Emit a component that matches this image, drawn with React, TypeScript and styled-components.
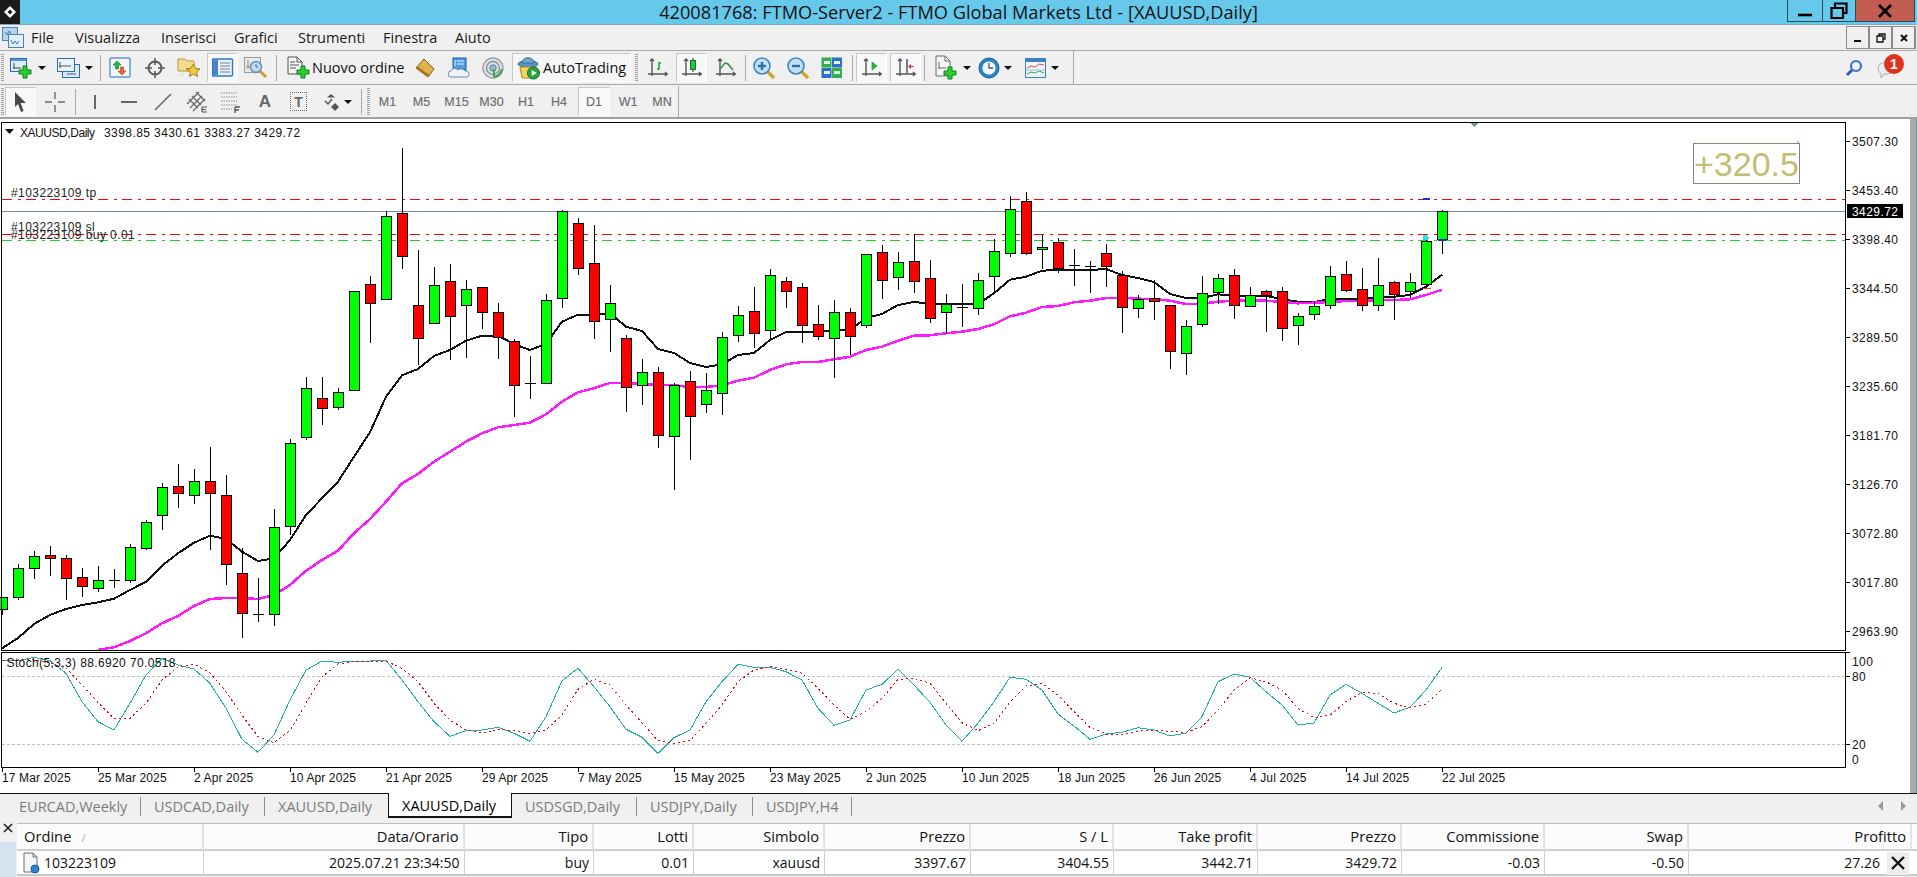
import React from "react";
import styled, { createGlobalStyle } from "styled-components";

const UI_FONT = `"Open Sans", "Noto Sans", "Liberation Sans", sans-serif`;
const CHART_FONT = `"Liberation Sans", Arial, sans-serif`;

const Global = createGlobalStyle`
  html, body { margin: 0; padding: 0; background: #f0f0f0; overflow: hidden; }
  #root { width: 1917px; height: 877px; }
  * { box-sizing: border-box; }
`;

const Page = styled.div`
  width: 1917px;
  height: 877px;
  display: flex;
  flex-direction: column;
  font-family: ${UI_FONT};
  background: #f0f0f0;
  color: #111;
  overflow: hidden;
`;

/* ---------- title bar ---------- */
const TitleBar = styled.header`
  height: 25px;
  flex: none;
  display: grid;
  grid-template-columns: 1fr auto 1fr;
  background: #66c9eb;
  border-bottom: 1px solid #7fa6b8;
`;
const AppBadge = styled.div`
  width: 20px;
  height: 24px;
  background: #1b1b1b;
  display: flex;
  align-items: center;
  justify-content: center;
`;
const TitleText = styled.div`
  font-size: 18.2px;
  line-height: 24px;
  white-space: nowrap;
  color: #111;
`;
const WindowButtons = styled.div`
  justify-self: end;
  display: flex;
  height: 22px;
  margin-right: 2px;
`;
const WindowButton = styled.div<{ $w: number; $close?: boolean }>`
  width: ${(p) => p.$w}px;
  height: 22px;
  border: 1px solid #2c4a58;
  border-top: none;
  margin-left: -1px;
  background: ${(p) => (p.$close ? "#c25b50" : "transparent")};
  display: flex;
  align-items: center;
  justify-content: center;
`;

/* ---------- menu ---------- */
const MenuBar = styled.nav`
  height: 25px;
  flex: none;
  display: flex;
  align-items: center;
  background: #f0f0f0;
  position: relative;
`;
const MenuGlyph = styled.div`
  width: 31px;
  padding-left: 2px;
  display: flex;
`;
const MenuItem = styled.span<{ $w: number }>`
  width: ${(p) => p.$w}px;
  font-size: 14.5px;
  line-height: 25px;
  color: #1a1a1a;
`;
const MdiButtons = styled.div`
  margin-left: auto;
  display: flex;
  margin-right: 1px;
`;
const MdiButton = styled.div`
  width: 24px;
  height: 23px;
  margin-left: -1px;
  border: 1px solid #8c8c8c;
  border-width: 1px 2px 1px 1px;
  display: flex;
  align-items: center;
  justify-content: center;
`;

/* ---------- toolbars ---------- */
const ToolRow = styled.div`
  height: 34px;
  flex: none;
  display: flex;
  align-items: center;
  border-top: 1px solid #a8a8a8;
  background: #f0f0f0;
`;
const ToolRowLower = styled(ToolRow)`
  height: 35px;
  padding-top: 1px;
  border-bottom: 2px solid #a0a0a0;
`;
const ToolGroup = styled.div<{ $w: number }>`
  width: ${(p) => p.$w}px;
  display: flex;
  align-items: center;
  border-right: 1px solid #a8a8a8;
  height: 100%;
`;
const Tool = styled.div<{ $w: number; $active?: boolean; $ml?: number; $pad?: number; $gap?: number }>`
  width: ${(p) => p.$w}px;
  height: 29px;
  flex: none;
  margin-left: ${(p) => p.$ml ?? 0}px;
  padding-left: ${(p) => p.$pad ?? 0}px;
  display: flex;
  align-items: center;
  justify-content: ${(p) => (p.$pad != null ? "flex-start" : "center")};
  gap: ${(p) => p.$gap ?? 4}px;
  font-size: 14.5px;
  white-space: nowrap;
  background: ${(p) => (p.$active ? "#f8f8f8" : "transparent")};
  border: 1px solid ${(p) => (p.$active ? "#c8c8c8" : "transparent")};
  border-right-color: ${(p) => (p.$active ? "#ffffff" : "transparent")};
  border-bottom-color: ${(p) => (p.$active ? "#ffffff" : "transparent")};
`;
const AutoButton = styled(Tool)`
  background: #f6f6f6;
  border: 1px solid #c8c8c8;
  border-right-color: #fff;
  border-bottom-color: #fff;
`;
const Caret = styled.i`
  width: 0;
  height: 0;
  flex: none;
  border-left: 4px solid transparent;
  border-right: 4px solid transparent;
  border-top: 4px solid #111;
`;
const Sep = styled.div<{ $w?: number }>`
  width: ${(p) => p.$w ?? 5}px;
  flex: none;
  height: 26px;
  display: flex;
  justify-content: center;
  &::before { content: ""; width: 1px; background: #a8a8a8; }
`;
const Grip = styled.div<{ $w: number }>`
  width: ${(p) => p.$w}px;
  flex: none;
  height: 27px;
  display: flex;
  justify-content: center;
  &::before {
    content: "";
    width: 3px;
    background: repeating-linear-gradient(#a0a0a0 0 1px, transparent 1px 2px);
  }
`;
const PeriodText = styled.span`
  font-family: ${CHART_FONT};
  font-size: 12.5px;
  color: #6e6e6e;
  -webkit-text-stroke: 0.2px #6e6e6e;
`;
const RightCluster = styled.div`
  margin-left: auto;
  margin-right: 10px;
  display: flex;
  align-items: center;
  gap: 12px;
`;
const LowerEnd = styled.div`
  width: 1px;
  height: 100%;
  background: #a8a8a8;
`;

/* ---------- chart ---------- */
const ChartArea = styled.main`
  height: 674px;
  flex: none;
  display: flex;
  background: #fff;
`;
const ChartSvg = styled.svg`
  display: block;
  width: 1910px;
  height: 674px;
  flex: none;
`;
const ChartScroll = styled.div`
  flex: 1;
  background: #ababab;
  border-right: 1px solid #7f8fa8;
`;
const ChartLabel = styled.text<{ $sp?: number; $c?: string; $o?: number }>`
  font-family: ${CHART_FONT};
  font-size: 12px;
  letter-spacing: ${(p) => p.$sp ?? 0}px;
  fill: ${(p) => p.$c ?? "#111"};
  opacity: ${(p) => p.$o ?? 1};
`;
const ProfitText = styled.text`
  font-family: ${CHART_FONT};
  font-size: 34px;
  fill: #c4bd72;
`;

/* ---------- tabs ---------- */
const TabBar = styled.div`
  height: 25px;
  flex: none;
  display: flex;
  border-top: 1px solid #111;
  background: #f0f0f0;
`;
const Tab = styled.div<{ $w: number; $active?: boolean; $pad?: number; $divider?: boolean }>`
  width: ${(p) => p.$w}px;
  flex: none;
  margin-top: ${(p) => (p.$active ? "-1px" : "3px")};
  height: ${(p) => (p.$active ? "25px" : "19px")};
  padding-left: ${(p) => p.$pad ?? 13}px;
  font-size: 14.5px;
  line-height: ${(p) => (p.$active ? "25px" : "19px")};
  white-space: nowrap;
  color: ${(p) => (p.$active ? "#000" : "#7b7b7b")};
  background: ${(p) => (p.$active ? "#fff" : "transparent")};
  border-right: 1px solid ${(p) => (p.$active ? "#111" : p.$divider ? "#8e8e8e" : "transparent")};
  border-left: ${(p) => (p.$active ? "1px solid #111" : "none")};
  border-bottom: ${(p) => (p.$active ? "2px solid #111" : "none")};
`;
const TabArrows = styled.div`
  margin-left: auto;
  margin-right: 11px;
  display: flex;
  align-items: center;
  gap: 18px;
`;
const TabArrow = styled.i<{ $right?: boolean }>`
  width: 0;
  height: 0;
  border-top: 5px solid transparent;
  border-bottom: 5px solid transparent;
  border-left: ${(p) => (p.$right ? "5px solid #9a9a9a" : "none")};
  border-right: ${(p) => (p.$right ? "none" : "5px solid #9a9a9a")};
`;

/* ---------- terminal table ---------- */
const Terminal = styled.section`
  flex: 1;
  display: flex;
  min-height: 0;
`;
const TerminalRail = styled.div`
  width: 17px;
  flex: none;
  display: flex;
  flex-direction: column;
`;
const RailClose = styled.div`
  height: 24px;
  padding: 5px 0 0 3px;
`;
const RailStrip = styled.div`
  flex: 1;
  width: 16px;
  background: #d6e4f1;
`;
const Table = styled.div`
  flex: 1;
  margin-top: 5px;
  border-top: 1px solid #bdbdbd;
`;
const COLS = "187px 260.5px 129.5px 100px 131px 146px 143px 144px 144px 143px 144px 223px";
const HeadRow = styled.div`
  display: grid;
  grid-template-columns: ${COLS};
  height: 27px;
  background: #fbfbfb;
  border-bottom: 2px solid #cfcfcf;
`;
const BodyRow = styled.div`
  display: grid;
  grid-template-columns: ${COLS};
  height: 25px;
  background: #fff;
  border-bottom: 2px solid #c8c8c8;
`;
const HeadCell = styled.div<{ $left?: boolean }>`
  font-size: 14.7px;
  line-height: 25px;
  text-align: ${(p) => (p.$left ? "left" : "right")};
  padding: 0 4px 0 7px;
  white-space: nowrap;
  border-right: 2px solid #e3e3e3;
`;
const BodyCell = styled.div<{ $left?: boolean }>`
  font-size: 14px;
  line-height: 24px;
  text-align: ${(p) => (p.$left ? "left" : "right")};
  padding: 0 4px;
  white-space: nowrap;
  border-right: 1px solid #cfcfcf;
`;
const SortMark = styled.span`
  color: #aaa;
  font-size: 11px;
  margin-left: 10px;
`;
const OrderCell = styled(BodyCell)`
  display: flex;
  align-items: center;
  gap: 3px;
`;
const ProfitCell = styled(BodyCell)`
  display: flex;
  align-items: center;
  justify-content: flex-end;
  gap: 7px;
  padding-right: 3px;
  border-right: none;
`;
const CloseButton = styled.div`
  width: 22px;
  height: 23px;
  background: #ededed;
  display: flex;
  align-items: center;
  justify-content: center;
`;

/* ---------- icons ---------- */
type IP = { children: React.ReactNode; w?: number; h?: number; vb?: string };
const Ico = ({ children, w = 24, h = 24, vb }: IP) => (
  <svg width={w} height={h} viewBox={vb ?? `0 0 ${w} ${h}`} style={{ flex: "none", display: "block" }}>
    {children}
  </svg>
);
const GPlus = ({ x, y, s = 1 }: { x: number; y: number; s?: number }) => (
  <path
    transform={`translate(${x} ${y}) scale(${s})`}
    d="M4 0h4v4h4v4H8v4H4V8H0V4h4z"
    fill="#2bd12b"
    stroke="#0d7d2a"
    strokeWidth="1"
  />
);
const Axes = () => (
  <path d="M5 2v17M1 17h20M3 4l2-2 2 2M18 15l2 2-2 2" fill="none" stroke="#555" strokeWidth="1.4" />
);
const NewChartIcon = () => (
  <Ico w={24} h={24}>
    <rect x="0.5" y="2.5" width="16" height="13" fill="#dfeafa" stroke="#2b6db5" />
    <rect x="1" y="3" width="15" height="2" fill="#5a94d6" />
    <path d="M4 7v6M3 12h8" stroke="#444" fill="none" />
    <GPlus x={9} y={10} />
  </Ico>
);
const ProfilesIcon = () => (
  <Ico w={24} h={24}>
    <rect x="5.5" y="8.5" width="17" height="13" fill="#dbe8f8" stroke="#2b6db5" />
    <rect x="0.5" y="2.5" width="17" height="13" fill="#eaf2fb" stroke="#2b6db5" />
    <path d="M3 6v6M2 10h12M10 18h9" stroke="#555" fill="none" />
  </Ico>
);
const MarketWatchIcon = () => (
  <Ico w={22} h={22}>
    <rect x="1" y="1" width="20" height="19" rx="1" fill="#f4f8fc" stroke="#5e9ad4" strokeWidth="1.5" />
    <path d="M8 4l-4 4h2.5v4h3V8H12z" fill="#1fbe3d" stroke="#0f7a26" strokeWidth=".6" />
    <path d="M13 18l4-4h-2.5v-4h-3v4H9z" fill="#f0652f" stroke="#b23c18" strokeWidth=".6" />
  </Ico>
);
const CrosshairIcon = () => (
  <Ico w={20} h={20}>
    <circle cx="10" cy="10" r="6.5" fill="none" stroke="#5a5a5a" strokeWidth="2" />
    <path d="M10 0v7M10 13v7M0 10h7M13 10h7" stroke="#5a5a5a" strokeWidth="1.6" />
  </Ico>
);
const FolderStarIcon = () => (
  <Ico w={24} h={24}>
    <path d="M1 3h7l2 2h7v10H1z" fill="#f5dc8a" stroke="#b69a45" />
    <path d="M3 15v6M6 17v4" stroke="#bbb" strokeDasharray="1 1" />
    <path d="M16.5 8l2 4.4 4.5.5-3.4 3 1 4.6-4.1-2.4-4.1 2.4 1-4.6L9 12.9l4.5-.5z" fill="#f2c93a" stroke="#9b7d19" />
  </Ico>
);
const NavigatorIcon = () => (
  <Ico w={22} h={20}>
    <rect x="0.5" y="1" width="20" height="17" rx="1" fill="#eaf3fc" stroke="#2b78c8" strokeWidth="1.4" />
    <rect x="1" y="2" width="5" height="15" fill="#3c8ad8" />
    <path d="M8 5h10M8 8h10M8 11h10M8 14h10" stroke="#6f7f90" />
    <path d="M3 5h2M3 8h2M3 11h2" stroke="#e33" />
  </Ico>
);
const TesterIcon = () => (
  <Ico w={24} h={24}>
    <rect x="0.5" y="1.5" width="16" height="15" fill="#e9e9e9" stroke="#9a9a9a" />
    <path d="M4 4v9M2 11h11" stroke="#8a8a8a" />
    <circle cx="12" cy="11" r="5.5" fill="#bcdcf2" stroke="#6e8fa8" strokeWidth="1.5" />
    <path d="M12 8v3h2" stroke="#47708f" fill="none" />
    <path d="M16 15l6 6" stroke="#c99a33" strokeWidth="2.6" />
  </Ico>
);
const NewOrderIcon = () => (
  <Ico w={24} h={24}>
    <path d="M1 1h9l5 5v12H1z" fill="#f4f4f4" stroke="#555" />
    <path d="M10 1v5h5M3 6h5M3 9h9M3 12h6" stroke="#555" fill="none" />
    <GPlus x={10} y={10} />
  </Ico>
);
const GoldIcon = () => (
  <Ico w={22} h={22}>
    <path d="M10 2l10 10-6 8-12-9z" fill="#e0b24a" stroke="#8a5a17" />
    <path d="M2 11l12 9 1.5-2L3 9z" fill="#a9741f" />
  </Ico>
);
const CloudDocIcon = () => (
  <Ico w={22} h={22}>
    <rect x="5" y="1" width="13" height="12" fill="#4d9be0" stroke="#1c5fa3" />
    <path d="M9 4h7M9 7h7M7 3v6" stroke="#e8f3fd" />
    <path d="M3 20a3 3 0 0 1 0-6c1-3 5-3 7-1 2-2 6-1 7 1a3 3 0 0 1 2 6z" fill="#eef3f9" stroke="#6e8aa8" />
  </Ico>
);
const RadarIcon = () => (
  <Ico w={22} h={22}>
    <circle cx="11" cy="11" r="10" fill="#dfe3e6" stroke="#9aa3aa" strokeWidth="1.4" />
    <circle cx="11" cy="11" r="6.5" fill="none" stroke="#8a949c" strokeWidth="1.4" />
    <circle cx="11" cy="11" r="3.2" fill="#8fc1dc" stroke="#6b7b85" />
    <path d="M12 12v8M12 20c4-1 7-4 8-8" fill="none" stroke="#37a24a" strokeWidth="1.8" />
  </Ico>
);
const AutoTradingIcon = () => (
  <Ico w={24} h={24}>
    <ellipse cx="11" cy="8" rx="10" ry="3.4" fill="#5b95c8" stroke="#3a6f9e" />
    <path d="M5 7c0-7 12-7 12 0z" fill="#6ea9da" stroke="#3a6f9e" />
    <path d="M3 11h16l-1 11H5z" fill="#f2d35b" stroke="#a88a20" />
    <circle cx="16.5" cy="17" r="6" fill="#25a83e" stroke="#116c25" />
    <path d="M14.7 14l5 3-5 3z" fill="#fff" />
  </Ico>
);
const BarChartIcon = () => (
  <Ico w={22} h={22}>
    <Axes />
    <path d="M12 5v8M10 12h2M12 6h2" stroke="#18a03a" strokeWidth="1.5" fill="none" />
  </Ico>
);
const CandleIcon = () => (
  <Ico w={22} h={22}>
    <Axes />
    <path d="M12 1v14" stroke="#222" />
    <rect x="9.5" y="3.5" width="5" height="9" fill="#27c43f" stroke="#14702a" />
  </Ico>
);
const LineIcon = () => (
  <Ico w={22} h={22}>
    <Axes />
    <path d="M5 12l5-6 3 1 5 6" fill="none" stroke="#2a8f47" strokeWidth="1.5" />
  </Ico>
);
const ZoomIcon = ({ plus }: { plus?: boolean }) => (
  <Ico w={24} h={24}>
    <path d="M15 15l7 7" stroke="#d7a32e" strokeWidth="3.4" />
    <circle cx="10" cy="10" r="8" fill="#bfe0f6" stroke="#3f86c2" strokeWidth="1.6" />
    <path d={plus ? "M6 10h8M10 6v8" : "M6 10h8"} stroke="#2b6fa8" strokeWidth="2.4" />
  </Ico>
);
const TileIcon = () => (
  <Ico w={22} h={22}>
    <rect x="0.5" y="0.5" width="10" height="10" fill="#2fb14c" />
    <rect x="11" y="0.5" width="10" height="10" fill="#2d6fc6" />
    <rect x="0.5" y="11" width="10" height="10" fill="#2d6fc6" />
    <rect x="11" y="11" width="10" height="10" fill="#2fb14c" />
    <path d="M3 4h6v3H3zM13 4h6v3h-6zM3 14h6v3H3zM13 14h6v3h-6z" fill="#e9f3ea" />
  </Ico>
);
const ShiftIcon = () => (
  <Ico w={22} h={22}>
    <Axes />
    <path d="M11 5l5 4-5 4z" fill="#27c43f" stroke="#14702a" strokeWidth=".6" />
  </Ico>
);
const ScrollIcon = () => (
  <Ico w={22} h={22}>
    <Axes />
    <path d="M12 2v14" stroke="#335" strokeWidth="1.3" />
    <path d="M19 9h-3V7l-3 2.5 3 2.5v-2h3z" fill="#e23a2a" />
  </Ico>
);
const TemplateIcon = () => (
  <Ico w={24} h={26}>
    <path d="M1 1h9l5 5v15H1z" fill="#f4f4f4" stroke="#6a6a6a" />
    <path d="M10 1v5h5M4 7v7M3 13h8" stroke="#6a6a6a" fill="none" />
    <GPlus x={9} y={12} />
  </Ico>
);
const ClockIcon = () => (
  <Ico w={22} h={24} vb="0 0 22 24">
    <circle cx="11" cy="12" r="10" fill="#2a84c8" stroke="#155f9a" />
    <circle cx="11" cy="12" r="6.6" fill="#f2f5f7" />
    <path d="M11 7v5h4" stroke="#555" fill="none" strokeWidth="1.3" />
  </Ico>
);
const IndicatorIcon = () => (
  <Ico w={22} h={22}>
    <rect x="0.5" y="1.5" width="20" height="19" fill="#eef4fb" stroke="#3d7fc0" />
    <rect x="1" y="2" width="19" height="3" fill="#3d7fc0" />
    <path d="M2 11l4-2 4 1 4-3 5 1" stroke="#d5552d" fill="none" />
    <path d="M2 17l4-2 4 1 4-2 5 2" stroke="#3aa356" fill="none" />
    <path d="M1 13h19" stroke="#a9bcd0" />
  </Ico>
);
const CursorIcon = () => (
  <Ico w={20} h={22}>
    <path d="M4 1l11 11H9.6l3 8-2.6 1-3-8L4 16z" fill="#4a4a4a" />
  </Ico>
);
const CrossIcon = () => (
  <Ico w={22} h={22}>
    <path d="M11 1v7M11 14v7M1 11h7M14 11h7" stroke="#6a6a6a" strokeWidth="1.4" />
  </Ico>
);
const VLineIcon = () => (
  <Ico w={6} h={20}>
    <path d="M3 3v14" stroke="#666" strokeWidth="2" />
  </Ico>
);
const HLineIcon = () => (
  <Ico w={20} h={6}>
    <path d="M2 3h16" stroke="#666" strokeWidth="2" />
  </Ico>
);
const TrendIcon = () => (
  <Ico w={20} h={20}>
    <path d="M2 18L18 2" stroke="#666" strokeWidth="1.6" />
  </Ico>
);
const ChannelIcon = () => (
  <Ico w={22} h={24}>
    <path d="M1 14L13 2M4 18L16 6M7 21L19 9M3 9l9 9M6 6l9 9M10 2l9 9" stroke="#666" strokeWidth="1.2" />
    <path d="M16 17h5M16 19.5h4M16 22h5M16 17v5" stroke="#555" strokeWidth="1.2" fill="none" />
  </Ico>
);
const FiboIcon = () => (
  <Ico w={22} h={24}>
    <path d="M1 3h16M1 7h16M1 11h16M1 15h16M1 19h11" stroke="#8a8a8a" strokeDasharray="1.5 1" />
    <path d="M15 17h5M15 20h4M15 17v6" stroke="#555" strokeWidth="1.4" fill="none" />
  </Ico>
);
const PeriodGlyph = styled.span`
  font-family: ${CHART_FONT};
  font-size: 17px;
  font-weight: 700;
  color: #666;
`;
const LabelBox = styled.span`
  width: 17px;
  height: 19px;
  border: 1px dotted #666;
  font-family: ${CHART_FONT};
  font-size: 14px;
  font-weight: 700;
  color: #666;
  display: flex;
  align-items: center;
  justify-content: center;
`;
const ShapesIcon = () => (
  <Ico w={16} h={18}>
    <path d="M7 1l4 3.5H3z" fill="#555" />
    <path d="M1 8l3 3 4-5" fill="none" stroke="#555" strokeWidth="1.5" />
    <path d="M11 10l4 4-4 4-4-4z" fill="#555" />
  </Ico>
);
const SearchIcon = () => (
  <Ico w={18} h={18}>
    <circle cx="11" cy="7" r="5" fill="#eaf3fb" stroke="#3c74c4" strokeWidth="2.2" />
    <path d="M7 11l-5 5" stroke="#2e5eaf" strokeWidth="3" />
  </Ico>
);
const BadgeDigit = styled.text`
  font-family: ${CHART_FONT};
  font-size: 14px;
  font-weight: 700;
  text-anchor: middle;
  fill: #fff;
`;
const ChatBadgeIcon = () => (
  <Ico w={32} h={30}>
    <path d="M3 15a8 6 0 1 1 6 6l-3 4v-4.4A6 6 0 0 1 3 15z" fill="#eceff2" stroke="#a6aeb5" />
    <circle cx="19" cy="11" r="10" fill="#e0311f" />
    <BadgeDigit x="19" y="16">1</BadgeDigit>
  </Ico>
);
const MenuChartIcon = () => (
  <Ico w={22} h={22}>
    <rect x="0.5" y="0.5" width="15" height="13" fill="#b7d3ee" stroke="#4a7fba" />
    <rect x="6.5" y="7.5" width="15" height="13" fill="#e2eefa" stroke="#4a7fba" />
    <path d="M3 5l2 3 2-4 2 3M9 13l2 4 2-3 2 3 2-3" fill="none" stroke="#3f76b2" />
  </Ico>
);
const DocOrderIcon = () => (
  <Ico w={20} h={22}>
    <path d="M3 1h9l4 4v15H3z" fill="#f7f7f7" stroke="#6d6d6d" />
    <path d="M12 1v4h4" fill="none" stroke="#6d6d6d" />
    <circle cx="14" cy="17" r="4" fill="#2c86d8" stroke="#155a9c" />
  </Ico>
);

/* ---------- chart data (page coordinates) ---------- */
type C = [string, number, number, number, number];
const CANDLES: C[] = [
  ["g",597,597.3,609.3,615],["g",564,568.3,597.7,600],["g",551,556.3,568.3,579],["r",546,555.3,558.3,576],
  ["r",555,558.3,578.3,600],["r",568,577.3,586.3,596.7],["g",566,580.3,588.3,591.7],["d",569,579.7,580,587.7],
  ["g",544,547.3,580.3,582.7],["g",520,522.3,548.3,550],["g",483.3,487.3,515.3,530],["r",464,486.3,493.7,507.7],
  ["g",469,481.3,495.3,503.7],["r",447,481.3,493.7,550],["r",475,495.3,564.3,584.7],["r",548.3,573.3,613.3,637.7],
  ["d",578,614.3,614.3,621.7],["g",509,527.3,614.3,625.7],["g",439.3,443.3,526.7,535],["g",377,388.3,437.7,440],
  ["r",377,398.3,408.3,425],["g",387.7,392.3,407.7,409.7],["g",290.7,291.3,390.3,390.7],["r",276,284.3,303.3,342.7],
  ["g",211.3,216.3,299.7,300.3],["r",148,213.3,256.3,269],["r",250,305.3,338.3,365],["g",267,285.3,323.3,323.3],
  ["r",264,281.3,316.3,360],["g",280,289.3,305.3,358],["r",287.3,287.3,312.3,329],["r",303,312.3,337.3,358.7],
  ["r",339.3,341.3,385.3,416.7],["d",356,383.3,383.3,398.7],["g",294,300.3,383.3,384.3],["g",210,211.3,298.3,307.7],
  ["r",218,223.3,268.3,274.7],["r",225,263.3,321.3,338.7],["g",285,303.3,319.3,351.7],["r",335,338.3,387.3,411.7],
  ["g",359,372.3,385.3,405],["r",367,372.3,435.3,447.7],["g",383.3,385.3,436.3,490],["r",371,381.3,416.3,460],
  ["g",373,390.3,404.3,412.7],["g",332.3,337.3,393.3,414.7],["g",306,315.3,335.3,341.7],["r",287,311.3,333.3,348],
  ["g",269,275.3,330.3,340],["r",277.3,281.3,291.3,308],["r",283,287.3,325.3,342.7],["r",305,324.3,336.3,340],
  ["g",300,312.3,338.3,377.7],["r",308,312.3,336.3,355],["g",254,254.3,325.3,328.3],["r",245,252.3,280.3,299],
  ["g",252,262.3,277.3,290],["r",234.3,261.3,281.3,293],["r",260,278.3,318.3,322.7],["g",294.3,304.3,312.3,334.3],
  ["d",284,307.3,307.3,326.7],["g",273.3,280.3,308.3,314.7],["g",239.3,251.3,276.3,291.7],["g",196,209.3,253.3,256.7],
  ["r",192.3,201.3,253.7,254.7],["g",235,247.3,249.3,268.7],["r",238.3,242.3,268.3,272.7],["d",249,264.7,264.7,286],
  ["d",261,265.7,265.7,292.7],["r",244,253.3,266.7,286.7],["r",271,275.3,307.3,332.7],["g",295,299.3,308.3,318],
  ["r",280,298.3,301.3,319.7],["r",305,305.3,351.3,368.7],["g",320,326.3,353.3,374.7],["g",276,293.3,324.3,326.7],
  ["g",274,278.3,292.3,303.7],["r",269,275.3,305.3,318.7],["g",287,295.3,306.3,307.3],["r",290,291.3,295.3,331.7],
  ["r",287,291.3,328.3,340.7],["g",313,316.3,325.3,344.7],["g",301,306.3,314.3,319.7],["g",266,276.3,305.3,308.7],
  ["r",261,274.3,290.3,291.7],["r",268,289.3,305.3,310.7],["g",258,285.3,305.3,310.7],["r",281.3,282.3,294.3,319.7],
  ["g",273,282.3,291.3,298.3],["g",237.3,241.3,284.3,284.3],["g",210,211.3,239.3,253.7],
];
const MA_BLACK = [648.3,638,624,615,609,605,602.3,598.7,590,581.7,565.7,553.3,542.7,535.7,539,551.7,561,558.3,540,515,498.3,481.7,456.7,432.3,396.7,375.3,369,356,350,340.7,335.7,335.7,344,350,344,321.7,314.7,314.7,313.3,326.7,331,349,353,363,367,364.3,355,353,340,332,332,332,330,330,318,314,305,302,303.7,304,304,304,293.3,279.7,276.7,270.7,270,270,270,269,275,278,282,294,298,298,294.3,295.7,295.7,295.7,299.3,301.7,302,299,299,299,297.3,296.7,295,286.7,274.7];
const MA_MAGENTA_START = 6;
const MA_MAGENTA = [650,647.3,641,633.3,623.3,616,606,599,598,598,599,595,585,570.7,560,550.7,533.3,519,501.7,483.3,474,461.7,451.7,441.7,433.3,427.3,425,422.7,414.3,401.7,392.3,388.3,383,383,384,384.7,385,387.3,387,385.3,380.7,377.7,370,364.3,362,362,359.3,356.7,350,346.7,340.7,335.7,335.3,333.3,331.7,329,324.3,316.3,312.7,307,306,302.3,300.7,298,297.7,298.7,299,300.7,304,303.7,301.7,300.7,300.7,300.7,302,303.3,302.7,302,301,300.7,300.3,300,299.3,295,289.7];
const STOCH_MAIN = [660.7,660.7,657.3,660.7,673.3,701.7,721.7,730,703.3,675,658.3,665,669,683.3,708.3,739.3,752.3,735,700,670,661,662.3,661,661,660.3,680,701.7,721.7,736.3,730.7,730,727.3,733.3,741.3,716.7,680.7,668.3,686.7,706.7,729.3,737.3,753.3,737.7,730,701.7,681.7,664.3,667.3,667.3,671.7,680,708.3,725.3,720,690,684.3,669.3,685,702.3,725,741.3,723.3,701.7,677.3,679.3,690,714,726,739.3,734,732.3,727.7,730,736,733,716.7,681.7,674,677.3,691.7,705,725,723,695,684.3,693.3,703.3,713,707.3,690,667.3];
const STOCH_SIGNAL = [660.7,660,659.3,663,668,685,702.3,718.3,718.3,703.3,680,667,664,673,691.7,715,736.7,742.7,730.7,703.3,676.7,664,661.7,661,661,668.3,681.7,703.3,720,730,733.3,729.3,730.7,733.3,730,715,689.3,679.3,685,705,722.7,740.7,743.3,740.7,723.3,705,681.7,670,666.7,669.3,673.3,688.3,705,719.3,711.7,698.3,679.3,678.3,683.3,703.3,722.7,730.7,723.3,701.7,686,683.3,695,711.7,727.3,734,735,731,730,731.7,732.3,726.7,710,690,677.7,681.7,690,708.3,717.7,715.3,701.7,692.3,693.3,703.3,707.7,704,689.3];
const cx = (i: number) => 2 + 16 * i;
const pts = (ys: number[], start = 0) => ys.map((y, i) => `${cx(i + start)},${y}`).join(" ");
const PRICES = ["3507.30","3453.40","3398.40","3344.50","3289.50","3235.60","3181.70","3126.70","3072.80","3017.80","2963.90"];
const DATES = ["17 Mar 2025","25 Mar 2025","2 Apr 2025","10 Apr 2025","21 Apr 2025","29 Apr 2025","7 May 2025","15 May 2025","23 May 2025","2 Jun 2025","10 Jun 2025","18 Jun 2025","26 Jun 2025","4 Jul 2025","14 Jul 2025","22 Jul 2025"];
const LEVELS: [string, number][] = [["100",661.7],["80",676.5],["20",744.5],["0",759.7]];
const DASHDOT = "10 6 3 5";

const Chart = () => (
  <ChartSvg viewBox="0 119 1910 674">
    <rect x="0" y="119" width="1910" height="674" fill="#fff" />
    <g shapeRendering="crispEdges">
      <line x1="2" x2="1845" y1="199.5" y2="199.5" stroke="#ff0000" strokeDasharray={DASHDOT} />
      <line x1="2" x2="1845" y1="234.5" y2="234.5" stroke="#ff0000" strokeDasharray={DASHDOT} />
      <line x1="2" x2="1845" y1="240.5" y2="240.5" stroke="#1fd21f" strokeDasharray={DASHDOT} />
      <line x1="2" x2="1845" y1="211.5" y2="211.5" stroke="#778899" />
    </g>
    <ChartLabel x="11" y="196.5" $sp={0.42} $c="#222">#103223109 tp</ChartLabel>
    <ChartLabel x="11" y="231" $sp={0.42} $c="#222">#103223109 sl</ChartLabel>
    <ChartLabel x="11" y="238.5" $sp={0.42} $c="#222">#103223109 buy 0.01</ChartLabel>
    <polyline points={pts(MA_BLACK)} fill="none" stroke="#111" strokeWidth="2" shapeRendering="crispEdges" />
    <polyline points={pts(MA_MAGENTA, MA_MAGENTA_START)} fill="none" stroke="#ff19ff" strokeWidth="2.5" shapeRendering="crispEdges" />
    <g shapeRendering="crispEdges">
      {CANDLES.map(([k, h, t, b, l], i) => {
        const x = cx(i);
        return (
          <g key={i}>
            <line x1={x + 0.5} x2={x + 0.5} y1={h} y2={l} stroke="#000" />
            {k === "d" ? (
              <line x1={x - 5} x2={x + 6} y1={Math.round(t) + 0.5} y2={Math.round(t) + 0.5} stroke="#000" />
            ) : (
              <rect
                x={x - 4.5}
                y={Math.round(t) + 0.5}
                width={10}
                height={Math.max(1, Math.round(b - t))}
                fill={k === "g" ? "#00ff00" : "#ff0000"}
                stroke="#000"
              />
            )}
          </g>
        );
      })}
      <rect x="1423" y="198" width="7" height="2" fill="#1c2fd0" />
      <path d="M1423 235h3l3 3-2 2h-4z" fill="#28e0f0" />
      <rect x="1438" y="239" width="8" height="2" fill="#1c2fd0" />
      <rect x="1423" y="288" width="8" height="1" fill="#ff3030" />
      <path d="M1469 122h10l-5 5z" fill="#7b8ea3" />
    </g>

    <g shapeRendering="crispEdges" fill="none" stroke="#000">
      <rect x="1.5" y="122.5" width="1844" height="528" />
      <rect x="1.5" y="652.5" width="1844" height="115" />
      {PRICES.map((_, i) => (
        <line key={i} x1="1846" x2="1850" y1={141.5 + 49 * i} y2={141.5 + 49 * i} />
      ))}
      <line x1="1846" x2="1850" y1="676.5" y2="676.5" />
      <line x1="1846" x2="1850" y1="744.5" y2="744.5" />
      <line x1="1846" x2="1850" y1="652.5" y2="652.5" />
      {DATES.map((_, i) => (
        <line key={i} x1={2.5 + 96 * i} x2={2.5 + 96 * i} y1="768" y2="772" />
      ))}
    </g>

    <path d="M5 129h9l-4.5 5z" fill="#111" />
    <ChartLabel x="20" y="137" $sp={-0.45}>XAUUSD,Daily</ChartLabel>
    <ChartLabel x="104" y="137" $sp={0.42}>3398.85 3430.61 3383.27 3429.72</ChartLabel>

    <rect x="1693.5" y="143.5" width="106" height="40" fill="#fff" stroke="#8b8377" />
    <ProfitText x="1694" y="176">+320.5</ProfitText>
    <rect x="1797" y="141" width="2" height="2" fill="#d0a0e0" />

    {PRICES.map((p, i) => (
      <ChartLabel key={p} x="1852" y={146 + 49 * i} $sp={0.42}>{p}</ChartLabel>
    ))}
    <rect x="1847" y="204" width="56" height="14" fill="#000" />
    <ChartLabel x="1852" y="215.5" $sp={0.42} $c="#fff">3429.72</ChartLabel>

    <g shapeRendering="crispEdges" stroke="#c0c0c0" strokeDasharray="3 2">
      <line x1="2" x2="1845" y1="676.5" y2="676.5" />
      <line x1="2" x2="1845" y1="744.5" y2="744.5" />
    </g>
    <polyline points={pts(STOCH_MAIN)} fill="none" stroke="#20b2aa" strokeWidth="1" shapeRendering="crispEdges" />
    <polyline points={pts(STOCH_SIGNAL)} fill="none" stroke="#ff0000" strokeWidth="1" strokeDasharray="2 3" shapeRendering="crispEdges" />
    <ChartLabel x="6.5" y="667" $sp={0.38}>Stoch(5,3,3) 88.6920 70.0518</ChartLabel>
    {LEVELS.map(([t, y]) => (
      <ChartLabel key={t} x="1852" y={y + 4} $sp={0.42}>{t}</ChartLabel>
    ))}
    {DATES.map((d, i) => (
      <ChartLabel key={d} x={2 + 96 * i} y="782" $sp={0.12}>{d}</ChartLabel>
    ))}
  </ChartSvg>
);

const TABS: { t: string; w: number; pad?: number; active?: boolean; divider?: boolean }[] = [
  { t: "EURCAD,Weekly", w: 141, pad: 19, divider: true },
  { t: "USDCAD,Daily", w: 124, divider: true },
  { t: "XAUUSD,Daily", w: 123 },
  { t: "XAUUSD,Daily", w: 124, active: true, pad: 13 },
  { t: "USDSGD,Daily", w: 125, divider: true },
  { t: "USDJPY,Daily", w: 116, divider: true },
  { t: "USDJPY,H4", w: 99, divider: true },
];
const MENU: [string, number][] = [["File",44],["Visualizza",86],["Inserisci",73],["Grafici",64],["Strumenti",85],["Finestra",72],["Aiuto",50]];
const HEAD = ["Data/Orario","Tipo","Lotti","Simbolo","Prezzo","S / L","Take profit","Prezzo","Commissione","Swap","Profitto"];
const ROW = ["2025.07.21 23:34:50","buy","0.01","xauusd","3397.67","3404.55","3442.71","3429.72","-0.03","-0.50"];
const PERIODS: [string, number][] = [["M1",33],["M5",35],["M15",35],["M30",35],["H1",34],["H4",32]];

export default function App() {
  return (
    <Page>
      <Global />
      <TitleBar>
        <AppBadge>
          <Ico w={14} h={14}>
            <path d="M7 1l6 6-6 6-6-6z" fill="#fff" />
            <path d="M7 4.5L9.5 7 7 9.5 4.5 7z" fill="#1b1b1b" />
          </Ico>
        </AppBadge>
        <TitleText>420081768: FTMO-Server2 - FTMO Global Markets Ltd - [XAUUSD,Daily]</TitleText>
        <WindowButtons>
          <WindowButton $w={36}>
            <Ico w={16} h={16}><path d="M1 12h14" stroke="#000" strokeWidth="2.6" /></Ico>
          </WindowButton>
          <WindowButton $w={34}>
            <Ico w={18} h={18}><path d="M5 6V1.5h11.5V11H13M1.5 6H13v10H1.5z" fill="none" stroke="#000" strokeWidth="2.2" /></Ico>
          </WindowButton>
          <WindowButton $w={60} $close>
            <Ico w={16} h={16}><path d="M2 2l12 12M14 2L2 14" stroke="#000" strokeWidth="2.8" /></Ico>
          </WindowButton>
        </WindowButtons>
      </TitleBar>

      <MenuBar>
        <MenuGlyph><MenuChartIcon /></MenuGlyph>
        {MENU.map(([m, w]) => <MenuItem key={m} $w={w}>{m}</MenuItem>)}
        <MdiButtons>
          <MdiButton><Ico w={10} h={10}><path d="M1 8h7" stroke="#111" strokeWidth="2" /></Ico></MdiButton>
          <MdiButton><Ico w={10} h={10}><path d="M3 3V1h6v5H7M1 3h6v6H1z" fill="none" stroke="#111" strokeWidth="1.3" /></Ico></MdiButton>
          <MdiButton><Ico w={10} h={10}><path d="M2 2l6 6M8 2L2 8" stroke="#111" strokeWidth="2" /></Ico></MdiButton>
        </MdiButtons>
      </MenuBar>

      <ToolRow>
        <ToolGroup $w={1074}>
          <Grip $w={5} />
          <Tool $w={45} $pad={4}><NewChartIcon /><Caret /></Tool>
          <Tool $w={47} $pad={6}><ProfilesIcon /><Caret /></Tool>
          <Sep $w={6} />
          <Tool $w={34}><MarketWatchIcon /></Tool>
          <Tool $w={36}><CrosshairIcon /></Tool>
          <Tool $w={31}><FolderStarIcon /></Tool>
          <Tool $w={31} $ml={3} $active><NavigatorIcon /></Tool>
          <Tool $w={36}><TesterIcon /></Tool>
          <Sep $w={4} />
          <Tool $w={130} $pad={8} $gap={1}><NewOrderIcon />Nuovo ordine</Tool>
          <Tool $w={34}><GoldIcon /></Tool>
          <Tool $w={34}><CloudDocIcon /></Tool>
          <Tool $w={34}><RadarIcon /></Tool>
          <AutoButton $w={119} $ml={2} $pad={4} $gap={2}><AutoTradingIcon />AutoTrading</AutoButton>
          <Grip $w={10} />
          <Tool $w={34}><BarChartIcon /></Tool>
          <Tool $w={31} $ml={1} $active><CandleIcon /></Tool>
          <Tool $w={37}><LineIcon /></Tool>
          <Sep $w={3} />
          <Tool $w={34}><ZoomIcon plus /></Tool>
          <Tool $w={34}><ZoomIcon /></Tool>
          <Tool $w={34}><TileIcon /></Tool>
          <Sep $w={7} />
          <Tool $w={31} $active><ShiftIcon /></Tool>
          <Tool $w={31} $ml={3} $active><ScrollIcon /></Tool>
          <Sep $w={7} />
          <Tool $w={46} $pad={6}><TemplateIcon /><Caret /></Tool>
          <Tool $w={44} $pad={3}><ClockIcon /><Caret /></Tool>
          <Tool $w={46} $pad={6}><IndicatorIcon /><Caret /></Tool>
        </ToolGroup>
        <RightCluster>
          <SearchIcon />
          <ChatBadgeIcon />
        </RightCluster>
      </ToolRow>

      <ToolRowLower>
        <Grip $w={5} />
        <Tool $w={31} $active><CursorIcon /></Tool>
        <Tool $w={37}><CrossIcon /></Tool>
        <Sep $w={5} />
        <Tool $w={34}><VLineIcon /></Tool>
        <Tool $w={34}><HLineIcon /></Tool>
        <Tool $w={34}><TrendIcon /></Tool>
        <Tool $w={34}><ChannelIcon /></Tool>
        <Tool $w={34}><FiboIcon /></Tool>
        <Tool $w={34}><PeriodGlyph>A</PeriodGlyph></Tool>
        <Tool $w={33}><LabelBox>T</LabelBox></Tool>
        <Tool $w={42} $pad={8}><ShapesIcon /><Caret /></Tool>
        <Sep $w={9} />
        <Grip $w={5} />
        {PERIODS.map(([p, w]) => <Tool key={p} $w={w}><PeriodText>{p}</PeriodText></Tool>)}
        <Tool $w={32} $ml={3} $active><PeriodText>D1</PeriodText></Tool>
        <Tool $w={36}><PeriodText>W1</PeriodText></Tool>
        <Tool $w={32}><PeriodText>MN</PeriodText></Tool>
        <LowerEnd />
      </ToolRowLower>

      <ChartArea>
        <Chart />
        <ChartScroll />
      </ChartArea>

      <TabBar>
        {TABS.map((t, i) => (
          <Tab key={i} $w={t.w} $pad={t.pad} $active={t.active} $divider={t.divider}>{t.t}</Tab>
        ))}
        <TabArrows>
          <TabArrow />
          <TabArrow $right />
        </TabArrows>
      </TabBar>

      <Terminal>
        <TerminalRail>
          <RailClose>
            <Ico w={10} h={10}><path d="M1 1l8 8M9 1L1 9" stroke="#222" strokeWidth="1.6" /></Ico>
          </RailClose>
          <RailStrip />
        </TerminalRail>
        <Table>
          <HeadRow>
            <HeadCell $left>Ordine<SortMark>/</SortMark></HeadCell>
            {HEAD.map((h, i) => <HeadCell key={i}>{h}</HeadCell>)}
          </HeadRow>
          <BodyRow>
            <OrderCell $left><DocOrderIcon />103223109</OrderCell>
            {ROW.map((c, i) => <BodyCell key={i}>{c}</BodyCell>)}
            <ProfitCell>
              27.26
              <CloseButton>
                <Ico w={14} h={14}><path d="M1 1l12 12M13 1L1 13" stroke="#111" strokeWidth="2.4" /></Ico>
              </CloseButton>
            </ProfitCell>
          </BodyRow>
        </Table>
      </Terminal>
    </Page>
  );
}
